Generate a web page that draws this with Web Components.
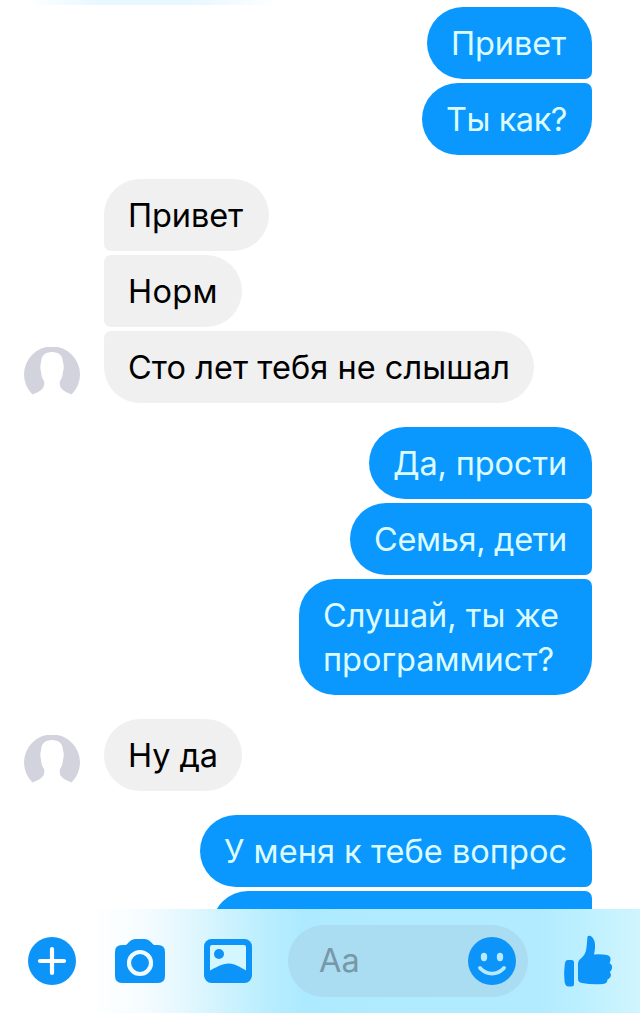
<!DOCTYPE html>
<html lang="ru">
<head>
<meta charset="utf-8">
<title>Чат</title>
<style>
html, body { margin: 0; height: 100%; overflow: hidden; background: #fff; }
body { font-family: Inter, "Noto Sans", sans-serif; }
</style>
</head>
<body>
<chat-screen>
  <message-group side="out">
    <chat-bubble side="out" w="165" text="115" pos="first">Привет</chat-bubble>
    <chat-bubble side="out" w="170" text="121" pos="last">Ты как?</chat-bubble>
  </message-group>
  <message-group side="in">
    <chat-bubble side="in" w="165" text="115" pos="first">Привет</chat-bubble>
    <chat-bubble side="in" w="138" pos="middle">Норм</chat-bubble>
    <chat-bubble side="in" w="430" pos="last">Сто лет тебя не слышал</chat-bubble>
  </message-group>
  <message-group side="out">
    <chat-bubble side="out" w="223" text="174" pos="first">Да, прости</chat-bubble>
    <chat-bubble side="out" w="242" text="193" pos="middle">Семья, дети</chat-bubble>
    <chat-bubble side="out" w="293" text="236" pos="last">Слушай, ты же<br>программист?</chat-bubble>
  </message-group>
  <message-group side="in">
    <chat-bubble side="in" w="138" pos="single">Ну да</chat-bubble>
  </message-group>
  <message-group side="out">
    <chat-bubble side="out" w="392" text="343" pos="first">У меня к тебе вопрос</chat-bubble>
    <chat-bubble side="out" w="380" pos="middle"></chat-bubble>
  </message-group>
  <chat-composer slot="footer"></chat-composer>
</chat-screen>
<script>
class ChatScreen extends HTMLElement {
  constructor() {
    super();
    this.attachShadow({ mode: 'open' }).innerHTML = `
      <style>
        :host { display: flex; flex-direction: column; width: 640px; height: 1013px; overflow: hidden; background: #fff; }
        main { flex: 1; min-height: 0; overflow: hidden; box-sizing: border-box; padding: 7px 48px 0 24px;
          display: flex; flex-direction: column; gap: 24px;
          background: linear-gradient(90deg, #fff0 24px, #e7f8ff 100px, #e7f8ff 190px, #fff0 280px) 0 0 / 100% 5px no-repeat; }
      </style>
      <main><slot></slot></main><slot name="footer"></slot>`;
  }
}
customElements.define('chat-screen', ChatScreen);

class UserAvatar extends HTMLElement {
  constructor() {
    super();
    this.attachShadow({ mode: 'open' }).innerHTML = `
      <style>:host { display: block; width: 56px; height: 56px; } svg { display: block; }</style>
      <svg width="56" height="56" viewBox="0 0 56 56">
        <path fill="#d3d3dd" d="M8.500 47.500A28 28 0 1 1 47.500 47.500C44 46 39.500 44.500 37 41C35.500 38.500 35.600 36 36 34C38 31.500 38.800 28 39 24.500C40 22 40 18 39 15.500C38.800 8.500 35 5 28 5C21 5 17.300 8.500 17 15.500C16 18 16.200 22 17 24.500C17.200 28 18 31.500 20 34C20.500 36 20.500 38.500 19 41C16.500 44.500 12 46 8.500 47.500Z"/>
      </svg>`;
  }
}
customElements.define('user-avatar', UserAvatar);

class MessageGroup extends HTMLElement {
  constructor() {
    super();
    const incoming = this.getAttribute('side') === 'in';
    this.attachShadow({ mode: 'open' }).innerHTML = `
      <style>
        :host { display: flex; align-items: flex-end; gap: 24px; flex: none; }
        .stack { flex: 1; display: flex; flex-direction: column; gap: 4px; align-items: ${incoming ? 'flex-start' : 'flex-end'}; }
      </style>
      ${incoming ? '<user-avatar></user-avatar>' : ''}<div class="stack"><slot></slot></div>`;
  }
}
customElements.define('message-group', MessageGroup);

class ChatBubble extends HTMLElement {
  constructor() {
    super();
    const out = this.getAttribute('side') === 'out';
    const pos = this.getAttribute('pos');
    const top = pos === 'first' || pos === 'single' ? 36 : 7;
    const bottom = pos === 'last' || pos === 'single' ? 36 : 7;
    const radius = out ? `36px ${top}px ${bottom}px 36px` : `${top}px 36px 36px ${bottom}px`;
    this.attachShadow({ mode: 'open' }).innerHTML = `
      <style>
        :host { display: block; box-sizing: border-box; width: ${this.getAttribute('w')}px; min-height: 72px;
          padding: 15px 0 13px 24px; border-radius: ${radius};
          background: ${out ? '#0a98ff' : '#f0f0f0'}; color: ${out ? '#dcfbff' : '#000'};
          font-size: 32.500px; line-height: 44px; white-space: nowrap; }
        span { display: inline-block; vertical-align: top; }
      </style><span><slot></slot></span>`;
  }
  connectedCallback() {
    const span = this.shadowRoot.querySelector('span');
    const target = Number(this.getAttribute('text')) || Number(this.getAttribute('w')) - 48;
    const lines = this.innerHTML.split('<br>');
    const longest = Math.max(...lines.map(l => l.length));
    if (longest) span.style.letterSpacing = (target - span.getBoundingClientRect().width) / longest + 'px';
  }
}
customElements.define('chat-bubble', ChatBubble);

class ChatComposer extends HTMLElement {
  constructor() {
    super();
    this.attachShadow({ mode: 'open' }).innerHTML = `
      <style>
        :host { display: flex; align-items: center; flex: none; box-sizing: border-box; height: 104px; padding: 0 26px 0 28px;
          background: linear-gradient(90deg, #fff 90px, #f5fcff 145px, #dcf6fe 200px, #b9eefe 265px, #aeeaff 300px, #b2ebff 540px, #bdf0ff 585px, #d0f5fe 640px); }
        svg { display: block; flex: none; fill: #0c94f8; }
        .camera { margin-left: 39px; }
        .photo { margin-left: 39px; }
        .field { display: flex; align-items: center; justify-content: space-between; box-sizing: border-box;
          width: 240px; height: 72px; margin-left: 36px; padding: 0 12px 0 31px; border-radius: 36px; background: #aadcf2; }
        .field span { font-size: 32.500px; line-height: 44px; color: #7897a7; }
        .like { margin-left: 35px; }
      </style>
      <svg width="48" height="48" viewBox="0 0 48 48"><circle cx="24" cy="24" r="24"/><path d="M24 12V36M12 24H36" stroke="#fff" stroke-width="4.200" stroke-linecap="round"/></svg>
      <svg class="camera" width="50" height="44" viewBox="0 0 50 44"><path d="M7 6H10.500C13 6 14 0 21 0H29C36 0 37 6 39.500 6H43Q50 6 50 13V37Q50 44 43 44H7Q0 44 0 37V13Q0 6 7 6Z"/><circle cx="25" cy="24" r="11" stroke="#effbff" stroke-width="4.200"/></svg>
      <svg class="photo" width="48" height="44" viewBox="0 0 48 44"><rect width="48" height="44" rx="7.500"/><path fill="#d4f6ff" d="M8 6H40Q42 6 42 8V31.500C37 28.500 31 24.500 25 24.500C18 24.500 11 29 6 31.500V8Q6 6 8 6Z"/><circle cx="15" cy="15" r="5"/></svg>
      <div class="field"><span>Aa</span>
        <svg width="48" height="48" viewBox="0 0 48 48"><circle cx="24" cy="24" r="24"/><ellipse cx="16" cy="20" rx="3.200" ry="4.200" fill="#b8eaff"/><ellipse cx="32" cy="20" rx="3.200" ry="4.200" fill="#b8eaff"/><path d="M12 31C19 38.500 29 38.500 36 31" fill="none" stroke="#b8eaff" stroke-width="3.800" stroke-linecap="round"/></svg>
      </div>
      <svg class="like" width="50" height="52" viewBox="0 0 50 52"><path d="M5 25H8.500Q11 25 11 27.500V49Q11 51.500 8.500 51.500H5.500Q2.500 51.500 1.600 47Q.500 38 1.800 29Q2.300 25 5 25ZM24.500 1.500Q26.500 0 29 2C33 6 32.500 13 31 19.500Q38 19 44 20Q48 21 47.500 25Q47.300 27 46.500 28Q50 30 48.800 34Q48.200 36 46.800 37Q49 40 47 42.500Q46 44 44.500 44.500Q44.500 48.500 40 49Q29 50 19 48Q15 47.500 15 44V29Q15 25.500 18 23.500Q23 19 23.500 12.500Z"/></svg>`;
  }
}
customElements.define('chat-composer', ChatComposer);
</script>
</body>
</html>
